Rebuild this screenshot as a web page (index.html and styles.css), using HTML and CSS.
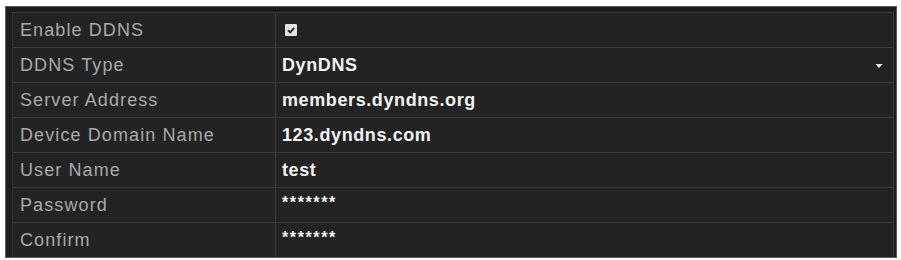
FILE: index.html
```html
<!DOCTYPE html>
<html>
<head>
<meta charset="utf-8">
<link rel="stylesheet" href="styles.css">
</head>
<body>
<div class="panel">
  <div class="table">
    <div class="label">Enable DDNS</div>
    <div class="value"><span class="checkbox"><svg viewBox="0 0 12 12" width="12" height="12"><path d="M3 6.2 L5.2 8.4 L9.2 3.8" fill="none" stroke="#2a2a2a" stroke-width="2"/></svg></span></div>
    <div class="label">DDNS Type</div>
    <div class="value select"><span>DynDNS</span><svg class="arrow" viewBox="0 0 8 6" width="8" height="6"><path d="M0.5 1 L7.5 1 L4 5 Z" fill="#e6e6e6"/></svg></div>
    <div class="label">Server Address</div>
    <div class="value">members.dyndns.org</div>
    <div class="label">Device Domain Name</div>
    <div class="value">123.dyndns.com</div>
    <div class="label">User Name</div>
    <div class="value">test</div>
    <div class="label">Password</div>
    <div class="value pw">*******</div>
    <div class="label">Confirm</div>
    <div class="value pw">*******</div>
  </div>
</div>
</body>
</html>
```

FILE: styles.css
```css
html, body {
  margin: 0;
  padding: 0;
  background: #ffffff;
}
body {
  padding: 6px 4px 0 5px;
  font-family: "Liberation Sans", Arial, sans-serif;
}
.panel {
  box-sizing: border-box;
  width: 892px;
  border: 1px solid #5c5c5c;
  background: #1d1d1d;
  padding: 5px 2px 0 6px;
}
.table {
  display: grid;
  grid-template-columns: 262px 1fr;
  grid-auto-rows: 34px;
  gap: 1px;
  background: #3a3a3a;
  border-top: 1px solid #3a3a3a;
  border-left: 1px solid #333;
  border-right: 1px solid #3a3a3a;
}
.label, .value {
  background: #232323;
  display: flex;
  align-items: center;
  font-size: 18px;
  letter-spacing: 1.1px;
}
.label {
  color: #a9a9a9;
  padding-left: 7px;
}
.value {
  color: #f2f2f2;
  padding-left: 6px;
  font-weight: bold;
  letter-spacing: 0.6px;
}
.checkbox {
  display: block;
  width: 12px;
  height: 12px;
  margin-left: 3px;
  margin-top: -1px;
  background: #e2e2e2;
  border-radius: 1px;
}
.checkbox svg {
  display: block;
}
.select {
  justify-content: space-between;
  padding-right: 10px;
}
.arrow {
  display: block;
  margin-top: 2px;
}
.pw {
  font-size: 16px;
  letter-spacing: 1.6px;
  padding-bottom: 4px;
}
```
